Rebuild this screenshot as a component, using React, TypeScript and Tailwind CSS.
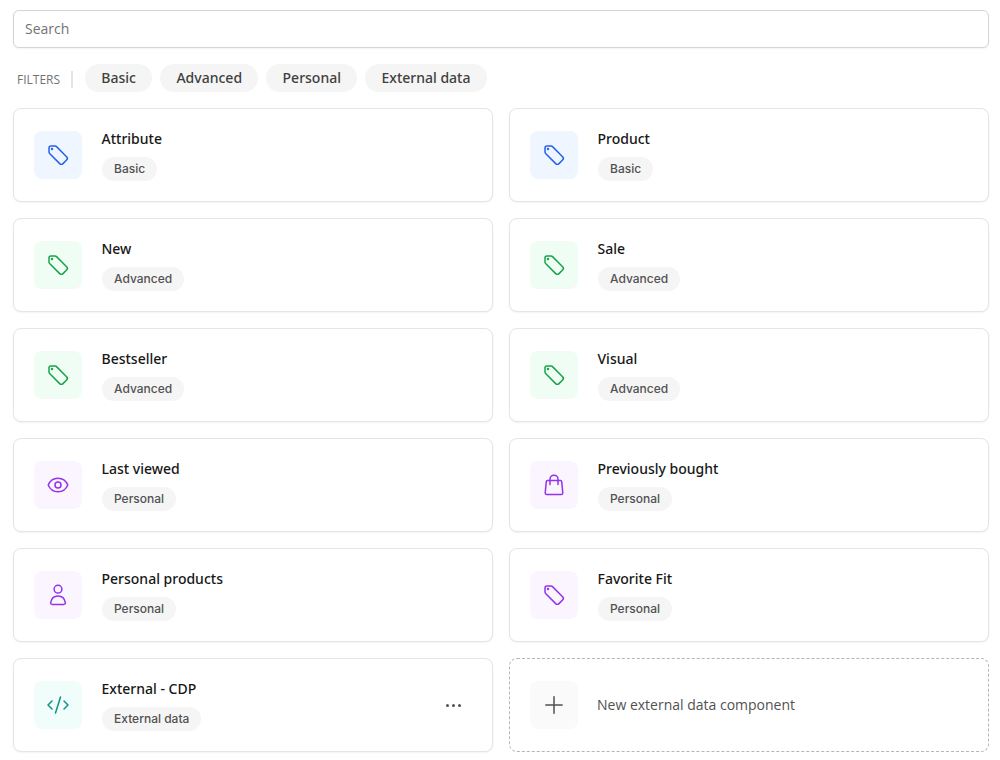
import { CodeXml, Plus } from "lucide-react";
import type { ReactNode } from "react";

type Tone = "blue" | "green" | "purple" | "teal";

interface CardType {
  title: string;
  label: string;
  tone: Tone;
  icon: ReactNode;
  menu?: boolean;
}

const toneClasses: Record<Tone, string> = {
  blue: "bg-[#eff6ff] text-[#2563eb]",
  green: "bg-[#f0fdf4] text-[#16a34a]",
  purple: "bg-[#faf5ff] text-[#9333ea]",
  teal: "bg-[#f0fdfa] text-[#0d9488]",
};

function Glyph({ children }: { children: ReactNode }) {
  return (
    <svg width="24" height="24" viewBox="0 0 24 24" fill="none" stroke="currentColor" strokeWidth="1.5" strokeLinecap="round" strokeLinejoin="round">
      {children}
    </svg>
  );
}

const tag = (
  <Glyph>
    <path d="M3 5C3 3.8 3.8 3 5 3H9C9.6 3 10.1 3.2 10.5 3.6L20.6 13.7C21.6 14.7 21.6 16 20.6 17L17 20.6C16 21.6 14.7 21.6 13.7 20.6L3.6 10.5C3.2 10.1 3 9.6 3 9Z" />
    <circle cx="6" cy="6" r="0.5" />
  </Glyph>
);

const eye = (
  <Glyph>
    <path d="M2.2 12C4 7.8 7.8 5.2 12 5.2S20 7.8 21.8 12C20 16.2 16.2 18.8 12 18.8S4 16.2 2.2 12Z" />
    <circle cx="12" cy="12" r="3" />
  </Glyph>
);

const bag = (
  <Glyph>
    <path d="M5.4 7.6H18.6C19.2 7.6 19.6 8 19.7 8.6L20.8 20C20.8 20.8 20.4 21.4 19.6 21.4H4.4C3.6 21.4 3.2 20.8 3.2 20L4.3 8.6C4.4 8 4.8 7.6 5.4 7.6Z" />
    <path d="M8 11.5V6.2C8 3.9 9.8 2.2 12 2.2S16 3.9 16 6.2V11.5" />
  </Glyph>
);

const person = (
  <Glyph>
    <circle cx="12" cy="6.2" r="3.9" />
    <path d="M6.2 21.4C5 21.4 4.5 20.6 4.7 19.6C5.3 15.6 8.2 12.9 12 12.9S18.7 15.6 19.3 19.6C19.5 20.6 19 21.4 17.8 21.4Z" />
  </Glyph>
);

const cards: CardType[] = [
  { title: "Attribute", label: "Basic", tone: "blue", icon: tag },
  { title: "Product", label: "Basic", tone: "blue", icon: tag },
  { title: "New", label: "Advanced", tone: "green", icon: tag },
  { title: "Sale", label: "Advanced", tone: "green", icon: tag },
  { title: "Bestseller", label: "Advanced", tone: "green", icon: tag },
  { title: "Visual", label: "Advanced", tone: "green", icon: tag },
  { title: "Last viewed", label: "Personal", tone: "purple", icon: eye },
  { title: "Previously bought", label: "Personal", tone: "purple", icon: bag },
  { title: "Personal products", label: "Personal", tone: "purple", icon: person },
  { title: "Favorite Fit", label: "Personal", tone: "purple", icon: tag },
  { title: "External - CDP", label: "External data", tone: "teal", icon: <CodeXml size={24} strokeWidth={1.5} />, menu: true },
];

const filters = ["Basic", "Advanced", "Personal", "External data"];

function Card({ card }: { card: CardType }) {
  return (
    <div className="flex h-[94px] items-center rounded-lg border border-[#e5e5e5] bg-white pl-5 pr-[21px] shadow-[0_1px_2px_rgba(0,0,0,0.05)]">
      <div className={`flex h-12 w-12 shrink-0 items-center justify-center rounded-lg ${toneClasses[card.tone]}`}>
        {card.icon}
      </div>
      <div className="ml-5 flex-1">
        <div className="-ml-[0.5px] font-['Noto_Sans',sans-serif] text-sm font-medium leading-5 text-[#171717]">{card.title}</div>
        <span className="mt-2 inline-flex h-6 items-center rounded-full bg-[#f5f5f5] px-3 font-['Inter',sans-serif] text-xs font-medium text-[#525252]">
          {card.label}
        </span>
      </div>
      {card.menu && (
        <div className="mr-2.5 flex gap-[3px]">
          <span className="h-[3px] w-[3px] rounded-full bg-[#525252]" />
          <span className="h-[3px] w-[3px] rounded-full bg-[#525252]" />
          <span className="h-[3px] w-[3px] rounded-full bg-[#525252]" />
        </div>
      )}
    </div>
  );
}

export default function App() {
  return (
    <div className="min-h-screen bg-white px-[13px] pt-2.5 font-['Open_Sans',sans-serif]">
      <input
        placeholder="Search"
        className="block h-[38px] w-[976px] rounded-md border border-[#d4d4d4] bg-white pb-0.5 pl-[11px] pr-3 text-sm text-[#171717] shadow-[0_1px_2px_rgba(0,0,0,0.05)] outline-none placeholder:text-[#737373]"
      />

      <div className="mt-4 flex h-7 items-center">
        <span className="pl-1 pt-[3px] text-xs text-[#737373]">FILTERS</span>
        <span className="ml-[11px] mr-3 mt-0.5 h-[17px] w-0.5 bg-[#e5e5e5]" />
        <div className="flex gap-2">
          {filters.map((filter) => (
            <span
              key={filter}
              className="flex h-7 items-center rounded-full bg-[#f5f5f5] px-[16.25px] font-['Noto_Sans',sans-serif] text-sm font-medium text-[#404040]"
            >
              {filter}
            </span>
          ))}
        </div>
      </div>

      <div className="mt-4 grid w-[976px] grid-cols-2 gap-4">
        {cards.map((card) => (
          <Card key={card.title} card={card} />
        ))}
        <div className="flex h-[94px] items-center rounded-lg border border-dashed border-[#b5b5b5] pl-5">
          <div className="flex h-12 w-12 items-center justify-center rounded-lg bg-[#fafafa] text-[#525252]">
            <Plus size={28} strokeWidth={1.3} />
          </div>
          <span className="ml-5 -translate-x-px text-sm text-[#525252]">New external data component</span>
        </div>
      </div>
    </div>
  );
}
